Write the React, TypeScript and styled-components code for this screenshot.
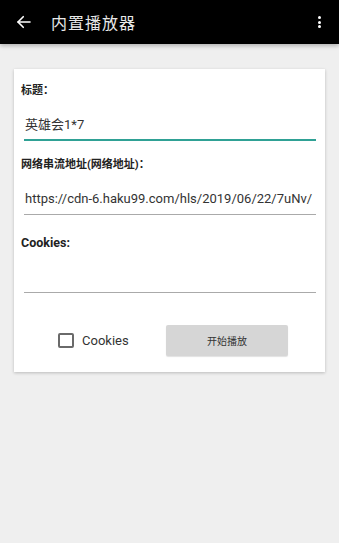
import React from "react";
import styled, { createGlobalStyle } from "styled-components";

const Global = createGlobalStyle`
  html, body { margin: 0; padding: 0; background: #efefef; }
  body { font-family: Roboto, "Noto Sans CJK SC", sans-serif; -webkit-font-smoothing: antialiased; }
  * { box-sizing: border-box; }
`;

const Page = styled.div`
  width: 339px;
  height: 543px;
  background: #efefef;
  display: flex;
  flex-direction: column;
  overflow: hidden;
`;

const TopBar = styled.header`
  height: 44px;
  background: #000;
  display: flex;
  align-items: center;
  padding: 0 14px 0 15px;
  box-shadow: 0 2px 4px rgba(0, 0, 0, 0.25);
  position: relative;
  z-index: 1;
`;

const IconButton = styled.div`
  display: flex;
  align-items: center;
  justify-content: center;
  color: #fff;
`;

const Title = styled.h1`
  margin: 0 0 0 18px;
  font-family: "Noto Sans CJK SC", sans-serif;
  font-weight: 400;
  font-size: 16px;
  color: #e8e8e8;
  letter-spacing: 1px;
  flex: 1;
`;

const Dots = styled.div`
  display: flex;
  flex-direction: column;
  gap: 1.5px;
  margin-right: 4px;
`;

const Dot = styled.span`
  width: 3px;
  height: 3px;
  border-radius: 50%;
  background: #fff;
`;

const Card = styled.section`
  margin: 25px 14px 0 14px;
  background: #fff;
  box-shadow: 0 1px 3px rgba(0, 0, 0, 0.22);
  padding: 12px 9px 16px 7px;
  display: flex;
  flex-direction: column;
`;

const Label = styled.div<{ $mt?: number; $latin?: boolean }>`
  height: 20px;
  line-height: 20px;
  margin-top: ${(p) => p.$mt ?? 0}px;
  font-family: Roboto, "Noto Sans CJK SC", sans-serif;
  font-weight: 700;
  font-size: ${(p) => (p.$latin ? 12.5 : 11)}px;
  color: #222;
`;

const Field = styled.div<{ $active?: boolean }>`
  margin-left: 3px;
  padding: 14px 0 5px 1px;
  height: 40px;
  line-height: 20px;
  font-family: Roboto, "Noto Sans CJK SC", sans-serif;
  font-size: 13px;
  color: #333;
  white-space: nowrap;
  overflow: hidden;
  border-bottom: ${(p) => (p.$active ? "2px solid #2fa195" : "1px solid #aaa")};
`;

const BottomRow = styled.div`
  margin-top: 32px;
  height: 31px;
  display: flex;
  align-items: center;
  padding: 0 28px 0 37px;
`;

const CheckWrap = styled.label`
  display: flex;
  align-items: center;
  gap: 8px;
  font-family: Roboto, sans-serif;
  font-size: 13px;
  color: #333;
`;

const Box = styled.span`
  width: 16px;
  height: 15px;
  border: 2px solid #6a6a6a;
  border-radius: 2px;
`;

const Button = styled.button`
  margin-left: auto;
  width: 122px;
  height: 31px;
  border: none;
  border-radius: 2px;
  background: #d6d6d6;
  box-shadow: 0 1px 1px rgba(0, 0, 0, 0.12);
  font-family: "Noto Sans CJK SC", sans-serif;
  font-size: 10px;
  color: #333;
  padding: 0;
`;

export default function App() {
  return (
    <Page>
      <Global />
      <TopBar>
        <IconButton>
          <svg width="18" height="18" viewBox="0 0 24 24" fill="none" stroke="#fff" strokeWidth="2.2" strokeLinecap="round" strokeLinejoin="round">
            <path d="M20 12H4" />
            <path d="M11 5l-7 7 7 7" />
          </svg>
        </IconButton>
        <Title>内置播放器</Title>
        <Dots>
          <Dot />
          <Dot />
          <Dot />
        </Dots>
      </TopBar>
      <Card>
        <Label>标题：</Label>
        <Field $active>英雄会1*7</Field>
        <Label $mt={14}>网络串流地址(网络地址)：</Label>
        <Field>https://cdn-6.haku99.com/hls/2019/06/22/7uNv/</Field>
        <Label $mt={18} $latin>Cookies:</Label>
        <Field />
        <BottomRow>
          <CheckWrap>
            <Box />
            Cookies
          </CheckWrap>
          <Button>开始播放</Button>
        </BottomRow>
      </Card>
    </Page>
  );
}
